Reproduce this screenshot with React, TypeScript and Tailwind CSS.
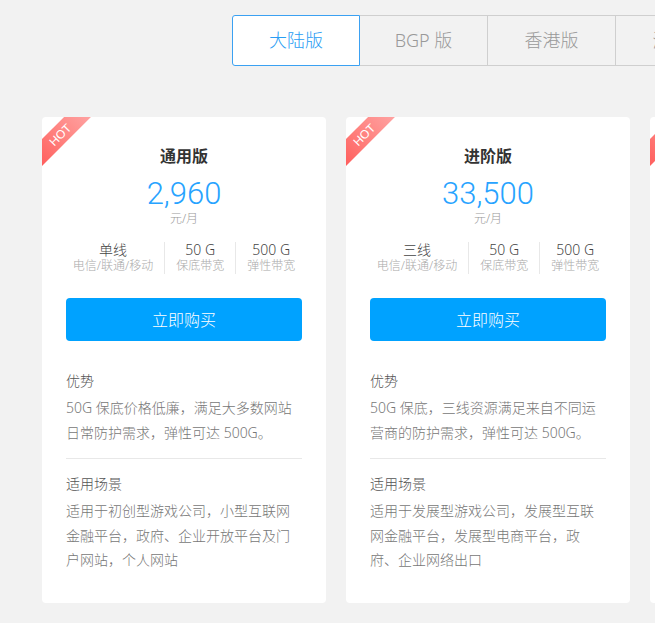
const plans = [
  {
    name: '通用版',
    price: '2,960',
    line: '单线',
    base: '50 G',
    flex: '500 G',
    advantage: '50G 保底价格低廉，满足大多数网站日常防护需求，弹性可达 500G。',
    scene: '适用于初创型游戏公司，小型互联网金融平台，政府、企业开放平台及门户网站，个人网站',
  },
  {
    name: '进阶版',
    price: '33,500',
    line: '三线',
    base: '50 G',
    flex: '500 G',
    advantage: '50G 保底，三线资源满足来自不同运营商的防护需求，弹性可达 500G。',
    scene: '适用于发展型游戏公司，发展型互联网金融平台，发展型电商平台，政府、企业网络出口',
  },
  {
    name: '高级版',
    price: '58,000',
    line: '三线',
    base: '100 G',
    flex: '600 G',
    advantage: '100G 保底，三线资源满足来自不同运营商的防护需求，弹性可达 600G。',
    scene: '适用于大型游戏公司，大型互联网金融平台，大型电商平台，政府、企业网络出口',
  },
];

const tabs = ['大陆版', 'BGP 版', '香港版', '海外版'];

function Card({ plan }: { plan: (typeof plans)[number] }) {
  return (
    <div className="relative w-[284px] shrink-0 overflow-hidden rounded-[4px] bg-white px-6 pt-[29px] pb-[30px] font-light">
      {/* HOT ribbon */}
      <div className="absolute left-[-23px] top-[8px] flex h-[19px] w-[82px] -rotate-45 items-center justify-center bg-gradient-to-r from-[#ff5757] to-[#ffa8a8] font-['Liberation_Sans',sans-serif] text-[12px] leading-none text-white">
        HOT
      </div>

      <div className="text-center text-[16px] font-bold leading-[20px] text-[#333]">{plan.name}</div>
      <div className="mt-[10px] text-center font-['Roboto','Noto_Sans',sans-serif] text-[31px] font-light leading-[36px] text-[#27a3ff]">
        {plan.price}
      </div>
      <div className="text-center text-[12px] leading-[14px] text-[#999]">元/月</div>

      <div className="mt-[16px] flex justify-center whitespace-nowrap">
        <div className="px-[11px] text-center">
          <div className="text-[14px] leading-[16px] text-[#444]">{plan.line}</div>
          <div className="text-[12px] leading-[16px] text-[#aaa]">电信/联通/移动</div>
        </div>
        <div className="border-l border-[#e8e8e8] px-[11px] text-center">
          <div className="text-[14px] leading-[16px] text-[#444]">{plan.base}</div>
          <div className="text-[12px] leading-[16px] text-[#aaa]">保底带宽</div>
        </div>
        <div className="border-l border-[#e8e8e8] px-[11px] text-center">
          <div className="text-[14px] leading-[16px] text-[#444]">{plan.flex}</div>
          <div className="text-[12px] leading-[16px] text-[#aaa]">弹性带宽</div>
        </div>
      </div>

      <button className="mt-[24px] h-[43px] w-full rounded-[4px] bg-[#00a2ff] text-[16px] text-white">
        立即购买
      </button>

      <div className="mt-[30px] text-[14px] leading-[20px] text-[#555]">优势</div>
      <div className="mt-[4px] text-[14px] leading-[25px] text-[#777]">{plan.advantage}</div>

      <div className="mt-[13px] h-px bg-[#e8e8e8]" />

      <div className="mt-[15px] text-[14px] leading-[20px] text-[#555]">适用场景</div>
      <div className="mt-[5px] text-[14px] leading-[24.5px] text-[#777]">{plan.scene}</div>
    </div>
  );
}

export default function App() {
  return (
    <div className="min-h-[623px] w-full overflow-hidden bg-[#f2f2f2] font-['Noto_Sans','Noto_Sans_CJK_SC',sans-serif]">
      {/* Region tabs */}
      <div className="flex pl-[232px] pt-[15px] font-light">
        {tabs.map((t, i) => (
          <div
            key={t}
            className={
              i === 0
                ? 'flex h-[51px] w-[128px] shrink-0 items-center justify-center rounded-l-[3px] border border-[#3ba1f2] bg-white text-[18px] text-[#2a9df4]'
                : 'flex h-[51px] w-[128px] shrink-0 items-center justify-center border-y border-r border-[#cfcfcf] text-[18px] text-[#999]'
            }
          >
            {t}
          </div>
        ))}
      </div>

      {/* Plan cards */}
      <div className="mt-[51px] flex gap-5 pl-[42px]">
        {plans.map((p) => (
          <Card key={p.name} plan={p} />
        ))}
      </div>
    </div>
  );
}
